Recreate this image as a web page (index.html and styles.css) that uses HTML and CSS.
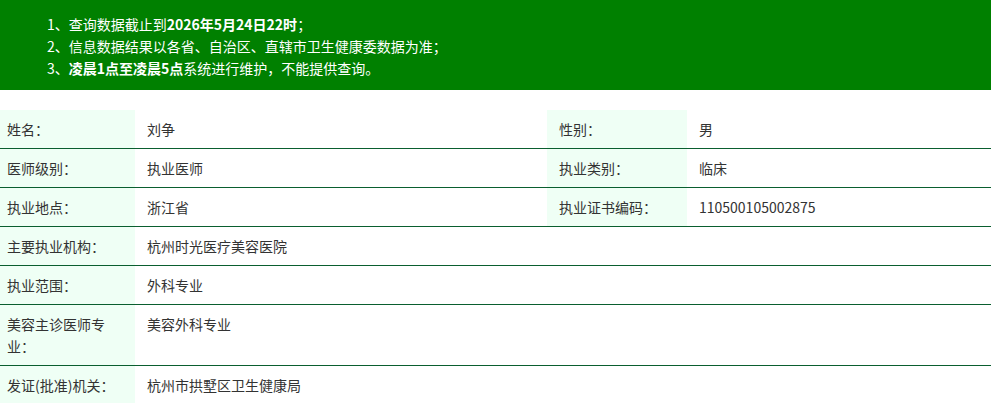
FILE: index.html
```html
<!DOCTYPE html>
<html lang="zh-CN">
<head>
<meta charset="utf-8">
<title>医师查询</title>
<link rel="stylesheet" href="styles.css">
</head>
<body>
<div class="notice">
  <p>1、查询数据截止到<b>2026年5月24日22时</b>；</p>
  <p>2、信息数据结果以各省、自治区、直辖市卫生健康委数据为准；</p>
  <p>3、<b>凌晨1点至凌晨5点</b>系统进行维护，不能提供查询。</p>
</div>
<div class="info">
  <div class="row">
    <div class="cell label first">姓名：</div>
    <div class="cell value">刘争</div>
    <div class="cell label">性别：</div>
    <div class="cell value">男</div>
  </div>
  <div class="row">
    <div class="cell label first">医师级别：</div>
    <div class="cell value">执业医师</div>
    <div class="cell label">执业类别：</div>
    <div class="cell value">临床</div>
  </div>
  <div class="row">
    <div class="cell label first">执业地点：</div>
    <div class="cell value">浙江省</div>
    <div class="cell label">执业证书编码：</div>
    <div class="cell value">110500105002875</div>
  </div>
  <div class="row">
    <div class="cell label first">主要执业机构：</div>
    <div class="cell value wide">杭州时光医疗美容医院</div>
  </div>
  <div class="row">
    <div class="cell label first">执业范围：</div>
    <div class="cell value wide">外科专业</div>
  </div>
  <div class="row">
    <div class="cell label first">美容主诊医师专业：</div>
    <div class="cell value wide">美容外科专业</div>
  </div>
  <div class="row">
    <div class="cell label first">发证(批准)机关：</div>
    <div class="cell value wide">杭州市拱墅区卫生健康局</div>
  </div>
</div>
</body>
</html>
```
FILE: styles.css
```css
html, body {
  margin: 0;
  padding: 0;
  background: #ffffff;
}
body {
  font-family: "Noto Sans CJK SC", "Noto Sans", sans-serif;
  font-size: 14px;
  color: #333333;
}
.notice {
  background: #008000;
  color: #ffffff;
  padding: 13px 0 11px 47px;
  line-height: 22px;
}
.notice p {
  margin: 0;
}
.notice b {
  font-weight: bold;
}
.info {
  margin-top: 20px;
}
.row {
  display: grid;
  grid-template-columns: 135px 412px 140px 1fr;
  border-bottom: 1px solid #0a5e2f;
}
.cell {
  padding: 8px 12px;
  line-height: 22px;
}
.label {
  background: #effff5;
}
.label.first {
  padding-left: 7px;
  padding-right: 7px;
}
.value.wide {
  grid-column: 2 / 5;
}
```
